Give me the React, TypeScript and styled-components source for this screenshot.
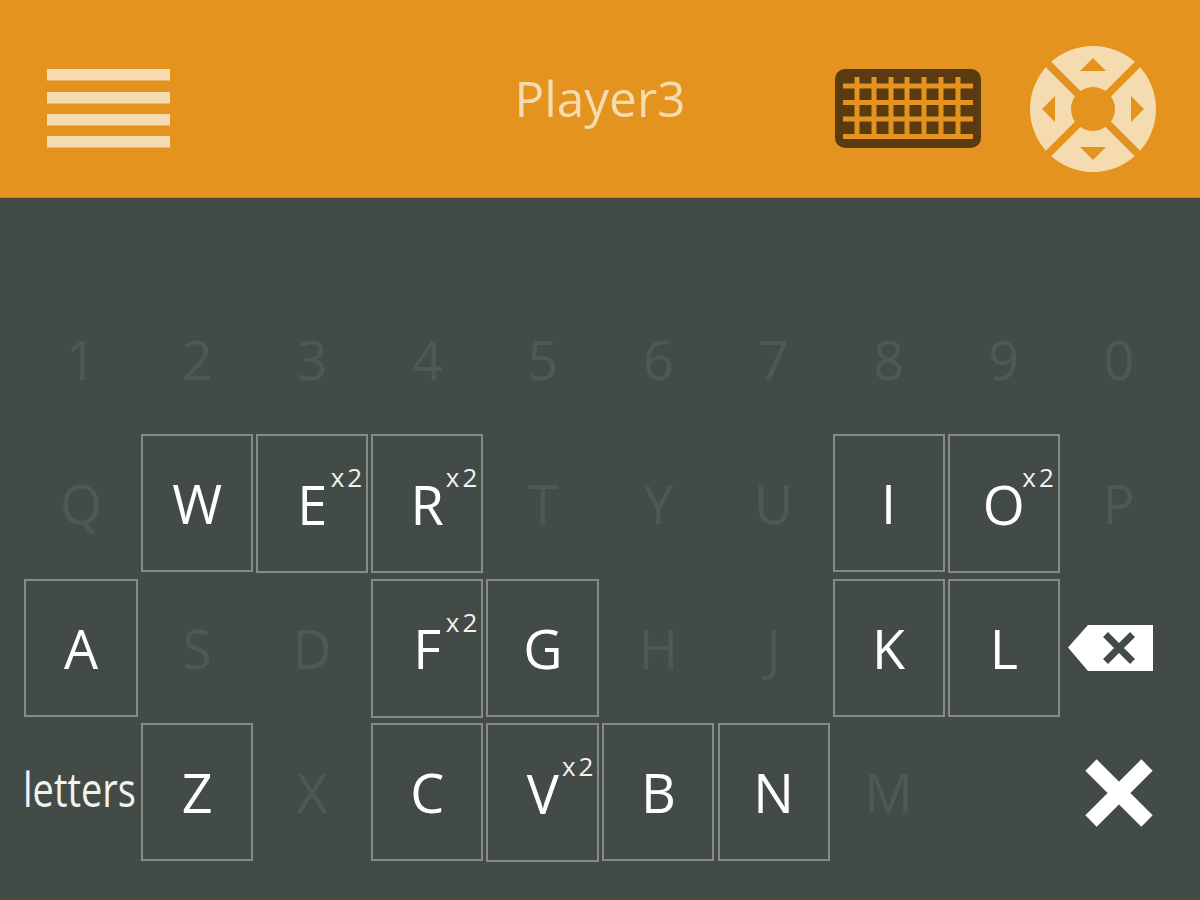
import styled, { createGlobalStyle } from "styled-components";

const cream = "#f5dbb0";
const orange = "#e3931e";
const slate = "#434b47";

const GlobalStyle = createGlobalStyle`
    html, body {
        margin: 0;
        padding: 0;
        background: ${slate};
    }
    body {
        font-family: "Open Sans", "Liberation Sans", sans-serif;
    }
`;

interface KeyDef {
    label: string;
    on?: boolean;
    x2?: boolean;
}

const parseRow = (row: string): KeyDef[] =>
    row.split(" ").map((k) => ({
        label: k.replace(/[+*]/g, ""),
        on: k.includes("+") || k.includes("*"),
        x2: k.includes("*"),
    }));

const digits = parseRow("1 2 3 4 5 6 7 8 9 0");
const topRow = parseRow("Q W+ E* R* T Y U I+ O* P");
const homeRow = parseRow("A+ S D F* G+ H J K+ L+");
const bottomRow = parseRow("Z+ X C+ V* B+ N+ M");

const App = () => {
    const renderKey = (key: KeyDef) => (
        <Key key={key.label} $on={key.on} $tall={key.x2}>
            {key.label}
            {key.x2 && <Multiplier>x2</Multiplier>}
        </Key>
    );

    return (
        <Screen>
            <GlobalStyle />
            <Header>
                <HeaderLeft>
                    <MenuIcon width="123" height="79" viewBox="0 0 123 79">
                        <rect x="0" y="0" width="123" height="11.5" />
                        <rect x="0" y="23" width="123" height="11.5" />
                        <rect x="0" y="45" width="123" height="11.5" />
                        <rect x="0" y="67" width="123" height="11.5" />
                    </MenuIcon>
                </HeaderLeft>
                <Title>Player3</Title>
                <HeaderRight>
                    <svg width="146" height="79" viewBox="0 0 146 79">
                        <rect width="146" height="79" rx="10" fill="#5a3b10" />
                        <g stroke={orange} strokeWidth="5">
                            <path d="M8 17H138M8 33.5H138M8 50H138M8 67.5H138" />
                            <path d="M22 8V67M39 8V67M56 8V67M72 8V67M89 8V67M106 8V67M123 8V67" />
                        </g>
                    </svg>
                    <svg width="128" height="128" viewBox="-64 -64 128 128">
                        <circle r="63" fill={cream} />
                        <g stroke={orange} strokeWidth="7.5">
                            <path d="M-50 -50L50 50M-50 50L50 -50" />
                        </g>
                        <circle r="22" fill={orange} />
                        <g fill={orange}>
                            <path d="M0 -51L-13 -38H13Z" />
                            <path d="M0 51L-13 38H13Z" />
                            <path d="M-51 0L-38 -13V13Z" />
                            <path d="M51 0L38 -13V13Z" />
                        </g>
                    </svg>
                </HeaderRight>
            </Header>
            <Keyboard>
                <DigitRow>{digits.map(renderKey)}</DigitRow>
                <KeyRow>{topRow.map(renderKey)}</KeyRow>
                <KeyRow>
                    {homeRow.map(renderKey)}
                    <ActionCell>
                        <svg width="85" height="46" viewBox="0 0 85 46">
                            <path d="M0 22.5L20 0H85V46H20Z" fill="#fff" />
                            <path
                                d="M37.5 9.5L64.5 36.5M37.5 36.5L64.5 9.5"
                                stroke={slate}
                                strokeWidth="7"
                            />
                        </svg>
                    </ActionCell>
                </KeyRow>
                <KeyRow>
                    <LettersLabel>letters</LettersLabel>
                    {bottomRow.map(renderKey)}
                    <Spacer />
                    <ActionCell>
                        <svg width="68" height="68" viewBox="0 0 68 68">
                            <path d="M6 6L62 62M6 62L62 6" stroke="#fff" strokeWidth="16" />
                        </svg>
                    </ActionCell>
                </KeyRow>
            </Keyboard>
        </Screen>
    );
};

export default App;

const Screen = styled.div`
    width: 1200px;
    height: 900px;
    overflow: hidden;
    background: ${slate};
`;

const Header = styled.header`
    height: 198px;
    box-sizing: border-box;
    display: grid;
    grid-template-columns: 1fr auto 1fr;
    align-items: center;
    background: ${orange};
    border-bottom: 1px solid #b98a2c;
`;

const HeaderLeft = styled.div`
    display: flex;
    padding-left: 47px;
    padding-top: 20px;
`;

const MenuIcon = styled.svg`
    fill: ${cream};
`;

const Title = styled.h1`
    margin: 0;
    font-size: 49.5px;
    font-weight: 400;
    line-height: 1;
    color: ${cream};
`;

const HeaderRight = styled.div`
    display: flex;
    align-items: center;
    justify-content: flex-end;
    gap: 48px;
    padding-right: 43px;
    padding-top: 20px;
`;

const Keyboard = styled.main`
    display: flex;
    flex-direction: column;
    padding: 92px 0 0 24px;
`;

const DigitRow = styled.div`
    display: grid;
    grid-template-columns: 114px 112px 112px 112px 113px 112px 112px 112px 112px 112px;
    column-gap: 3.1px;
    height: 144px;
`;

const KeyRow = styled(DigitRow)`
    height: 137px;
    margin-bottom: 7.5px;
`;

const Key = styled.div<{ $on?: boolean; $tall?: boolean }>`
    position: relative;
    box-sizing: border-box;
    display: flex;
    align-items: center;
    justify-content: center;
    height: ${(p) => (p.$tall ? "139px" : "138px")};
    border: 2px solid ${(p) => (p.$on ? "#858c88" : "transparent")};
    font-size: 54px;
    font-weight: 400;
    line-height: 1;
    color: ${(p) => (p.$on ? "#fff" : "#505854")};
`;

const Multiplier = styled.sup`
    position: absolute;
    top: 28px;
    right: 1px;
    font-size: 26px;
    font-weight: 400;
    letter-spacing: 3px;
    line-height: 1;
    color: #f2f2f2;
`;

const LettersLabel = styled.div`
    display: flex;
    align-items: center;
    justify-content: center;
    font-size: 48px;
    line-height: 1;
    color: #f2f2f2;
    padding-bottom: 8px;
    padding-right: 4px;
    transform: scaleX(0.79);
    white-space: nowrap;
`;

const Spacer = styled.div``;

const ActionCell = styled.div`
    display: flex;
    align-items: center;
    justify-content: flex-end;
    padding-right: 22px;
`;
